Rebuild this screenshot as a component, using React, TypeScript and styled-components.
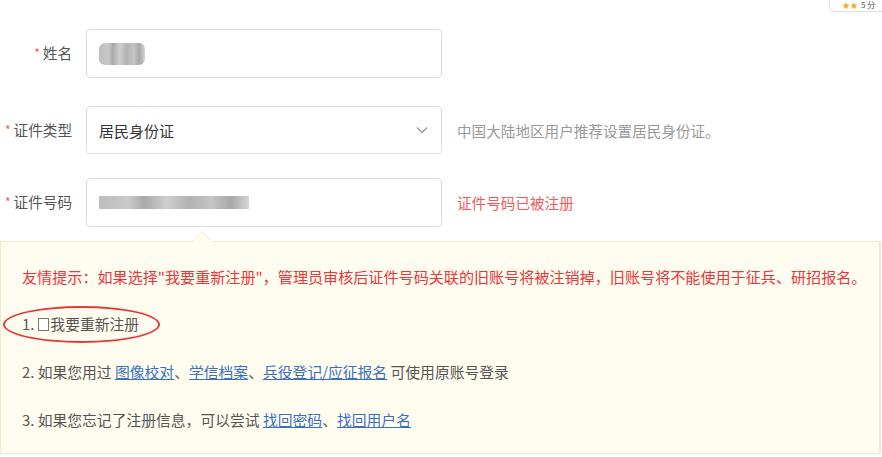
import React from "react";
import styled, { createGlobalStyle } from "styled-components";

const Global = createGlobalStyle`
  html, body { margin: 0; padding: 0; background: #fff; }
  body { font-family: "Noto Sans CJK SC", "Microsoft YaHei", sans-serif; color: #333; }
`;

const Page = styled.div`
  position: relative;
  width: 882px;
  height: 457px;
  overflow: hidden;
  background: #fff;
`;

const Badge = styled.div`
  position: absolute;
  top: -2px;
  right: -2px;
  width: 55px;
  height: 14px;
  border: 1px solid #e2e2e2;
  border-radius: 0 0 0 3px;
  background: #fff;
  font-size: 8px;
  line-height: 12px;
  color: #555;
  display: flex;
  gap: 3px;
  padding-left: 12px;
  box-sizing: border-box;
`;

const Star = styled.span`
  color: #f7a51c;
`;

const Form = styled.div`
  display: flex;
  flex-direction: column;
  padding-top: 29px;
`;

const Row = styled.div<{ $mt?: number }>`
  display: grid;
  grid-template-columns: 72px 356px auto;
  column-gap: 14px;
  align-items: center;
  margin-top: ${(p) => p.$mt ?? 0}px;
`;

const Label = styled.div`
  font-size: 14.6px;
  color: #555;
  text-align: right;
  white-space: nowrap;
  line-height: 20px;
`;

const Req = styled.span`
  color: #ee5c5c;
  font-size: 12px;
  margin-right: 3px;
  position: relative;
  top: -1px;
`;

const Field = styled.div<{ $h: number }>`
  height: ${(p) => p.$h}px;
  box-sizing: border-box;
  border: 1px solid #dcdcdc;
  border-radius: 4px;
  background: #fff;
  display: flex;
  align-items: center;
  padding: 0 12px;
  justify-content: space-between;
`;

const Blur = styled.div<{ $w: number; $h: number }>`
  width: ${(p) => p.$w}px;
  height: ${(p) => p.$h}px;
  border-radius: ${(p) => (p.$h > 16 ? 6 : 1)}px;
  background: linear-gradient(90deg, #bdbdbd 0%, #c9c9c9 20%, #a9a9a9 30%, #cfcfcf 45%, #b3b3b3 60%, #c4c4c4 75%, #a8a8a8 88%, #d5d5d5 100%);
  filter: blur(0.6px);
`;

const SelectText = styled.span`
  font-size: 15px;
  color: #333;
`;

const Help = styled.div<{ $error?: boolean }>`
  font-size: 14.6px;
  color: ${(p) => (p.$error ? "#f05a5a" : "#999")};
  padding-left: 1px;
  white-space: nowrap;
`;

const Tip = styled.div`
  position: relative;
  margin-top: 14px;
  width: 881px;
  height: 213px;
  box-sizing: border-box;
  background: #fffcf0;
  border: 1px solid #f1ead0;
  border-right-width: 2px;
  padding: 24px 0 0 21px;
  display: flex;
  flex-direction: column;
  gap: 28px;
`;

const Arrow = styled.div`
  position: absolute;
  left: 190px;
  top: -11px;
  width: 0;
  height: 0;
  border-left: 11px solid transparent;
  border-right: 11px solid transparent;
  border-bottom: 11px solid #f1ead0;
  &::after {
    content: "";
    position: absolute;
    left: -10px;
    top: 1px;
    border-left: 10px solid transparent;
    border-right: 10px solid transparent;
    border-bottom: 10px solid #fffcf0;
  }
`;

const Line = styled.div<{ $red?: boolean }>`
  position: relative;
  font-size: ${(p) => (p.$red ? 15.1 : 14.8)}px;
  line-height: 20px;
  color: ${(p) => (p.$red ? "#e8363a" : "#555")};
  white-space: nowrap;
  display: flex;
  align-items: center;
`;

const Link = styled.a`
  color: #3a6fc4;
  text-decoration: underline;
  cursor: pointer;
`;

const Box = styled.span`
  display: inline-block;
  width: 11px;
  height: 13px;
  border: 1px solid #777;
  margin: 0 1px 0 4px;
  box-sizing: border-box;
  background: #fff;
`;

const Ellipse = styled.div`
  position: absolute;
  left: -19px;
  top: -8px;
  width: 157px;
  height: 37px;
  border: 2px solid #e53935;
  border-radius: 50%;
  box-sizing: border-box;
`;

const Chevron = () => (
  <svg width="14" height="14" viewBox="0 0 14 14" fill="none">
    <path d="M2 4.5 L7 9.5 L12 4.5" stroke="#999" strokeWidth="1.3" />
  </svg>
);

export default function App() {
  return (
    <Page>
      <Global />
      <Badge>
        <Star>★★</Star>
        <span>5 分</span>
      </Badge>
      <Form>
        <Row>
          <Label>
            <Req>*</Req>姓名
          </Label>
          <Field $h={49}>
            <Blur $w={46} $h={22} />
          </Field>
          <span />
        </Row>
        <Row $mt={28}>
          <Label>
            <Req>*</Req>证件类型
          </Label>
          <Field $h={48}>
            <SelectText>居民身份证</SelectText>
            <Chevron />
          </Field>
          <Help>中国大陆地区用户推荐设置居民身份证。</Help>
        </Row>
        <Row $mt={24}>
          <Label>
            <Req>*</Req>证件号码
          </Label>
          <Field $h={49}>
            <Blur $w={150} $h={13} />
          </Field>
          <Help $error>证件号码已被注册</Help>
        </Row>
      </Form>
      <Tip>
        <Arrow />
        <Line $red>
          友情提示：如果选择"我要重新注册"，管理员审核后证件号码关联的旧账号将被注销掉，旧账号将不能使用于征兵、研招报名。
        </Line>
        <Line>
          1.
          <Box />
          我要重新注册
          <Ellipse />
        </Line>
        <Line>
          2. 如果您用过&nbsp;<Link>图像校对</Link>、<Link>学信档案</Link>、<Link>兵役登记/应征报名</Link>&nbsp;可使用原账号登录
        </Line>
        <Line>
          3. 如果您忘记了注册信息，可以尝试&nbsp;<Link>找回密码</Link>、<Link>找回用户名</Link>
        </Line>
      </Tip>
    </Page>
  );
}
